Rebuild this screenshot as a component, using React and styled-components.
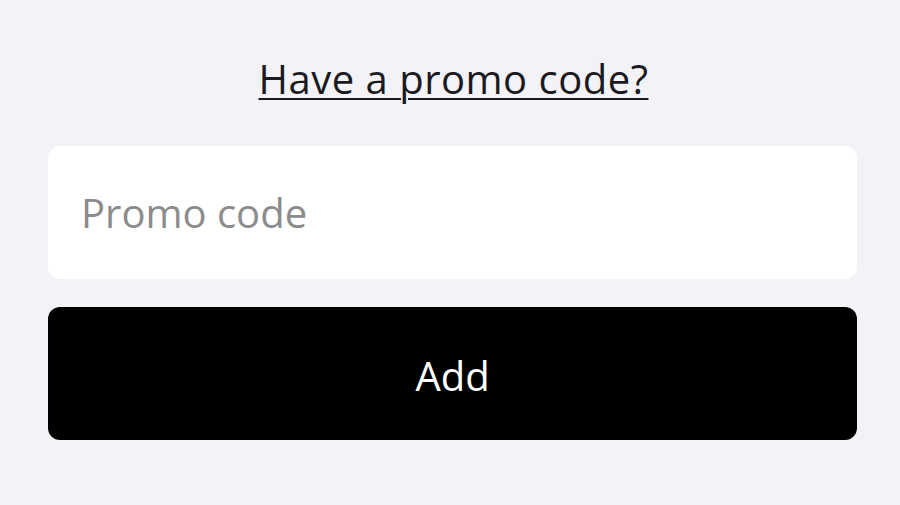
import React from 'react';
import styled, { createGlobalStyle } from 'styled-components';

const GlobalStyle = createGlobalStyle`
  html, body {
    margin: 0;
    padding: 0;
    background: #f2f2f7;
  }
  body {
    font-family: 'Open Sans', 'Noto Sans', sans-serif;
  }
`;

function App() {
  return (
    <>
      <GlobalStyle />
      <Wrapper>
        <PromoLink href='#'>Have a promo code?</PromoLink>
        <PromoInput type='text' placeholder='Promo code' />
        <AddButton type='button'>Add</AddButton>
      </Wrapper>
    </>
  );
}

const Wrapper = styled.div`
  display: flex;
  flex-direction: column;
  align-items: stretch;
  padding: 53px 43px 0 48px;
  width: 900px;
  height: 505px;
  box-sizing: border-box;
`;

const PromoLink = styled.a`
  align-self: center;
  margin-left: 2px;
  color: #1a1a1f;
  font-size: 40px;
  font-weight: 500;
  letter-spacing: 0.5px;
  line-height: 52px;
  text-decoration: underline;
  text-decoration-thickness: 2px;
  text-underline-offset: 4px;
  margin-bottom: 41px;
`;

const PromoInput = styled.input`
  height: 133px;
  box-sizing: border-box;
  border: none;
  border-radius: 12px;
  background: #ffffff;
  padding: 0 33px;
  font-family: inherit;
  font-size: 40px;
  color: #1a1a1f;
  outline: none;

  &::placeholder {
    color: #8c8c8c;
  }
`;

const AddButton = styled.button`
  margin-top: 28px;
  height: 133px;
  border: none;
  border-radius: 12px;
  background: #000000;
  color: #ffffff;
  font-family: inherit;
  font-size: 40px;
  font-weight: 500;
  padding-top: 4px;
  cursor: pointer;
`;

export default App;
